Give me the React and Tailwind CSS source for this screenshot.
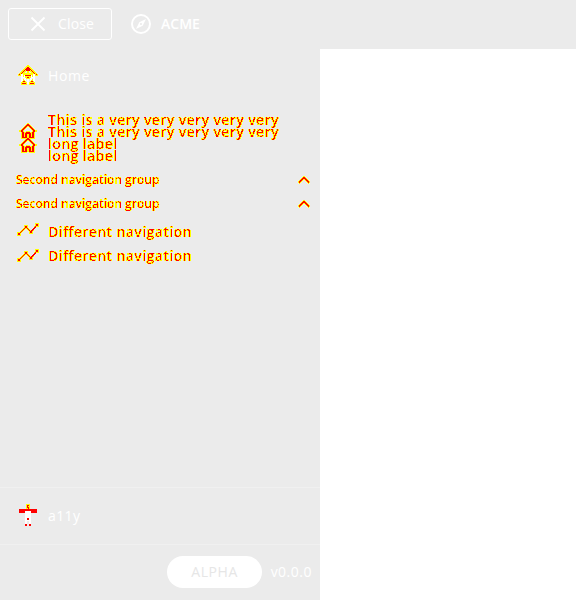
const HOME_PIXELS = [
  '.........YY.........',
  '........YYYY........',
  '.......YYRRYY.......',
  '......YYRRRRYY......',
  '.....YYRRRRRRYY.....',
  '....YYRYRRRRYRYY....',
  '...YYRYY.YY.YYRYY...',
  '..YYRYY..YY..YYRYY..',
  '.YYRYYYYYYYYYYYYRYY.',
  'YRYWWYYYYYYYYYYWWYRY',
  'YYYWWYWRRRRRRWYWWYYY',
  '...WWYWYYYYYYWYWW...',
  '...WWWWYYRRYYWWWW...',
  '...WW.WWYYYYWW.WW...',
  '...WWYWW.WW.WWYWW...',
  '...WWYYW.WW.WYYWW...',
  '...WYRRY.WW.YRRYW...',
  '...YYYYYYWWYYYYYY...',
  '...YRRRRYWWYRRRRY...',
  '...YYYYYY..YYYYYY...',
];
const HOUSE_PIXELS = [
  '.........YY.........',
  '........YRRY........',
  '.......YRRRRY.......',
  '......YRRYYRRY......',
  '.....YRRY..YRRY.....',
  '....YRRY....YRRY....',
  '...YRRY......YRRY...',
  '.YYRRY........YRRYY.',
  '.YYRRY..YYYY..YRRYY.',
  '...YRRYYRRRRYYRRY...',
  '...YRRYRRRRRRYRRY...',
  '...YRRYRRYYRRYRRY...',
  '...YRRYRRYYRRYRRY...',
  '...YRRYRRYYRRYRRY...',
  '...YRRRRRYYRRRRRY...',
  '...YYYYYY..YYYYYY...',
];
const A11Y_PIXELS = [
  '........YYYY........',
  '........YRRY........',
  '........YRYY........',
  '........YRRY........',
  '........YYRY........',
  '.RRRRRRRRRRRRRRRRRR.',
  '.RRRRRRRRRRRRRRRRRR.',
  '.RRRRRRWWWWWWRRRRRR.',
  '.RRRRRRWWWWWWRRRRRR.',
  '.......WWWWWW.......',
  '.......WWWWWW.......',
  '.......WWWWWW.......',
  '.......WWWWWW.......',
  '.......WWWWWW.......',
  '.......WWRRWW.......',
  '.......WWRRWW.......',
  '.......WWWWWW.......',
  '.......WW..WW.......',
  '.......WW..WW.......',
  '.......WW..WW.......',
  '.......RR..RR.......',
  '.......RR..RR.......',
];
const COLORS = { Y: '#ffff00', R: '#ff0000', W: '#ffffff' };

function PixelIcon({ rows, className }) {
  return (
    <svg className={className} viewBox={`0 0 ${rows[0].length} ${rows.length}`} shapeRendering="crispEdges">
      {rows.flatMap((row, y) =>
        [...row].map((cell, x) =>
          COLORS[cell] ? <rect key={`${x}-${y}`} x={x} y={y} width="1" height="1" fill={COLORS[cell]} /> : null
        )
      )}
    </svg>
  );
}

// Splits antialiased glyphs into solid red cores and solid yellow edges.
function MarkFilter() {
  return (
    <svg className="absolute h-0 w-0" aria-hidden="true">
      <filter id="mark" x="-5%" y="-20%" width="110%" height="140%" colorInterpolationFilters="sRGB">
        <feComponentTransfer in="SourceAlpha" result="edge">
          <feFuncR type="linear" slope="0" intercept="1" />
          <feFuncG type="linear" slope="0" intercept="1" />
          <feFuncB type="linear" slope="0" intercept="0" />
          <feFuncA type="linear" slope="100" intercept="-0.3" />
        </feComponentTransfer>
        <feComponentTransfer in="SourceAlpha" result="core">
          <feFuncR type="linear" slope="0" intercept="1" />
          <feFuncG type="linear" slope="0" intercept="0" />
          <feFuncB type="linear" slope="0" intercept="0" />
          <feFuncA type="linear" slope="60" intercept="-45" />
        </feComponentTransfer>
        <feMerge>
          <feMergeNode in="edge" />
          <feMergeNode in="core" />
        </feMerge>
      </filter>
    </svg>
  );
}

function TrendIcon({ className = '' }) {
  return (
    <svg className={`block h-5 w-6 shrink-0 ${className}`} viewBox="0 0 24 20">
      <g fill="#ffff00">
        <rect x="1" y="12" width="4" height="4" />
        <rect x="8" y="5" width="4" height="4" />
        <rect x="13" y="10" width="4" height="4" />
        <rect x="19" y="3" width="4" height="4" />
      </g>
      <path d="M3 14 10 7l5 5 6-7" fill="none" stroke="#ffff00" strokeWidth="2" shapeRendering="crispEdges" />
      <path d="M3 14 10 7l5 5 6-7" fill="none" stroke="#ff0000" strokeWidth="1.2" shapeRendering="crispEdges" />
      <g fill="#ff0000">
        <rect x="2" y="13" width="2" height="2" />
        <rect x="9" y="6" width="2" height="2" />
        <rect x="14" y="11" width="2" height="2" />
        <rect x="20" y="4" width="2" height="2" />
      </g>
    </svg>
  );
}

function Chevron() {
  return (
    <svg className="block h-2 w-3" viewBox="0 0 12 8" fill="none" shapeRendering="crispEdges">
      <path d="M.7 6.8 6 1.7l5.3 5.1" stroke="#ffff00" strokeWidth="3.2" />
      <path d="M1.2 6.3 6 1.7l4.8 4.6" stroke="#ff0000" strokeWidth="1.8" />
    </svg>
  );
}

function GroupRow() {
  return (
    <div className="flex h-6 items-center justify-between pl-4 pr-[10px]">
      <span className="text-xs font-semibold text-black [filter:url(#mark)]">Second navigation group</span>
      <Chevron />
    </div>
  );
}

function DifferentRow({ iconClass }) {
  return (
    <div className="flex h-6 items-center pl-4">
      <TrendIcon className={iconClass} />
      <span className="ml-2 text-sm font-semibold tracking-[0.4px] text-black [filter:url(#mark)]">Different navigation</span>
    </div>
  );
}

export default function App() {
  return (
    <div className="flex h-[600px] w-[576px] flex-col overflow-hidden bg-white font-['Open_Sans',sans-serif] text-white">
      <MarkFilter />
      <header className="flex h-[49px] shrink-0 items-center bg-[#ebebeb] pb-px pl-2 text-sm font-semibold">
        <button className="flex h-8 w-[104px] items-center rounded-[3px] border border-white pl-[21px]">
          <svg className="h-4 w-4" viewBox="0 0 16 16" stroke="currentColor" strokeWidth="1.8">
            <path d="m1.5 1.5 13 13m0-13-13 13" />
          </svg>
          <span className="ml-3 font-medium tracking-[0.15px]">Close</span>
        </button>
        <svg className="ml-[19px] h-5 w-5" viewBox="0 0 20 20">
          <circle cx="10" cy="10" r="9" fill="none" stroke="currentColor" strokeWidth="2" />
          <path fill="currentColor" fillRule="evenodd" d="m15 5-3.3 6.7L5 15l3.3-6.7zM10 8.9a1.1 1.1 0 1 0 0 2.2 1.1 1.1 0 0 0 0-2.2" />
        </svg>
        <span className="ml-[10px]">ACME</span>
      </header>
      <aside className="flex w-80 grow flex-col bg-[#ebebeb]">
        <nav className="grow">
          <div className="mb-[2px] flex h-[53px] items-center pl-[18px]">
            <PixelIcon rows={HOME_PIXELS} className="-mt-0.5 block h-5 w-5" />
            <span className="ml-[10px] text-sm font-medium tracking-[0.6px]">Home</span>
          </div>
          <div className="flex h-16 pl-[18px] pt-[10px]">
            <div className="pt-[9px]">
              <PixelIcon rows={HOUSE_PIXELS} className="block h-4 w-5" />
              <PixelIcon rows={HOUSE_PIXELS} className="-mt-[2px] block h-4 w-5" />
            </div>
            <div className="ml-[10px] whitespace-nowrap text-sm font-semibold leading-3 tracking-[0.4px] text-black [filter:url(#mark)]">
              <div>This is a very very very very very</div>
              <div>This is a very very very very very</div>
              <div>long label</div>
              <div>long label</div>
            </div>
          </div>
          <GroupRow />
          <GroupRow />
          <div className="pt-1">
            <DifferentRow iconClass="-mt-1" />
            <DifferentRow iconClass="" />
          </div>
        </nav>
        <div className="flex h-[57px] items-center border-t border-[#f0f0f0] pl-[18px]">
          <PixelIcon rows={A11Y_PIXELS} className="-mt-0.5 block h-[22px] w-5" />
          <span className="ml-[10px] text-sm font-medium tracking-[0.4px]">a11y</span>
        </div>
        <footer className="flex h-14 items-center justify-end border-t border-[#f0f0f0] pb-px pr-2 text-sm font-semibold">
          <span className="flex h-8 w-[95px] items-center justify-center rounded-full bg-white pl-px font-medium tracking-[0.6px] text-[#e6e6e6]">ALPHA</span>
          <span className="ml-[9px] font-medium tracking-[0.5px]">v0.0.0</span>
        </footer>
      </aside>
    </div>
  );
}
